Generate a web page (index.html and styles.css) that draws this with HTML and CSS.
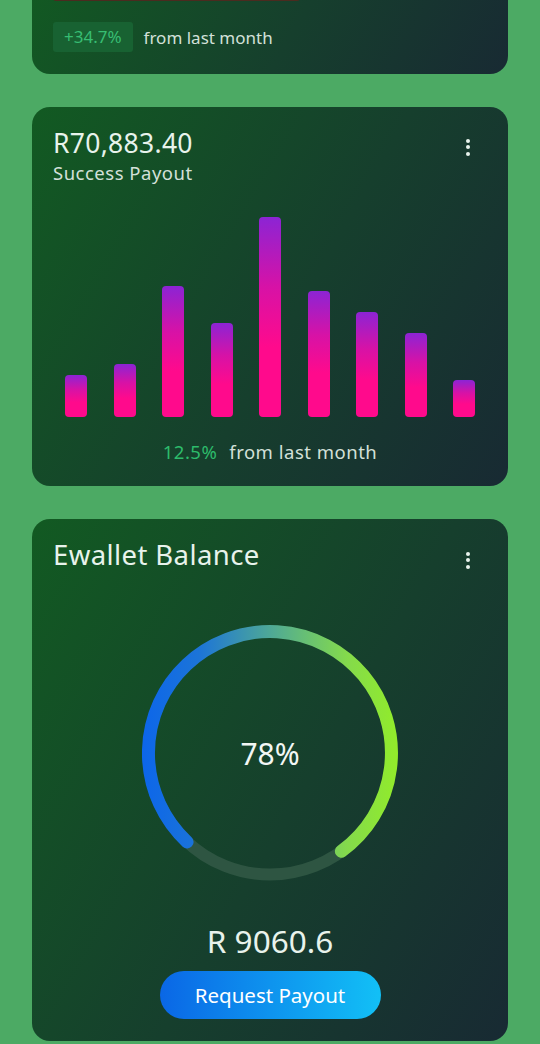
FILE: index.html
```html
<!DOCTYPE html>
<html lang="en">
<head>
    <meta charset="UTF-8">
    <meta name="viewport" content="width=device-width, initial-scale=1.0">
    <title>Payout Dashboard</title>
    <link rel="stylesheet" href="styles.css">
</head>
<body>

    <div class="screen">

        <!-- Growth card (scrolled, top cut off) -->
        <section class="card card-growth">
            <div class="progress"><div class="progress-fill"></div></div>
            <div class="growth-row">
                <span class="badge">+34.7%</span>
                <span class="muted">from last month</span>
            </div>
        </section>

        <!-- Success Payout -->
        <section class="card card-payout">
            <div class="card-head">
                <div>
                    <div class="amount">R70,883.40</div>
                    <div class="label">Success Payout</div>
                </div>
                <button class="kebab" aria-label="More"><span></span><span></span><span></span></button>
            </div>

            <div class="bars">
                <div class="bar" style="height: 42px"></div>
                <div class="bar" style="height: 53px"></div>
                <div class="bar" style="height: 131px"></div>
                <div class="bar" style="height: 94px"></div>
                <div class="bar" style="height: 200px"></div>
                <div class="bar" style="height: 126px"></div>
                <div class="bar" style="height: 105px"></div>
                <div class="bar" style="height: 84px"></div>
                <div class="bar" style="height: 37px"></div>
            </div>

            <div class="caption">
                <span class="up">12.5%</span>
                <span class="muted">from last month</span>
            </div>
        </section>

        <!-- Ewallet Balance -->
        <section class="card card-wallet">
            <div class="card-head">
                <h2 class="title">Ewallet Balance</h2>
                <button class="kebab" aria-label="More"><span></span><span></span><span></span></button>
            </div>

            <div class="gauge">
                <svg width="256" height="256" viewBox="0 0 256 256">
                    <defs>
                        <linearGradient id="arcGrad" gradientUnits="userSpaceOnUse" x1="0" y1="0" x2="256" y2="0">
                            <stop offset="0" stop-color="#0c66ea"/>
                            <stop offset="0.22" stop-color="#1c74d8"/>
                            <stop offset="0.5" stop-color="#4ea897"/>
                            <stop offset="0.8" stop-color="#84da4c"/>
                            <stop offset="1" stop-color="#92ec2a"/>
                        </linearGradient>
                    </defs>
                    <circle class="gauge-track" cx="128" cy="128" r="121.5"/>
                    <!-- 78% of the ring, from lower left round to lower right -->
                    <path class="gauge-arc" stroke="url(#arcGrad)"
                          d="M45.1 216.9 A121.5 121.5 0 1 1 199.4 226.3"/>
                </svg>
                <div class="gauge-value">78%</div>
            </div>

            <div class="balance">R 9060.6</div>
            <button class="btn-payout">Request Payout</button>
        </section>

    </div>

</body>
</html>
```

FILE: styles.css
```css
/* General */
body {
    margin: 0;
    background-color: #4caa64;
    font-family: "Noto Sans", "Open Sans", sans-serif;
    color: #e8f3ec;
    overflow: hidden;
}

.screen {
    margin-top: -21px;
    padding: 0 32px;
    display: flex;
    flex-direction: column;
    gap: 33px;
}

/* Cards */
.card {
    border-radius: 18px;
    background: linear-gradient(120deg, #125a22 0%, #163f2d 55%, #182a33 100%);
    padding: 16px 21px 22px;
}

.card-head {
    display: flex;
    justify-content: space-between;
    align-items: flex-start;
}

.kebab {
    width: 24px;
    height: 24px;
    margin: 12px 7px 0 0;
    padding: 0;
    border: none;
    background: none;
    display: flex;
    flex-direction: column;
    align-items: center;
    justify-content: center;
    gap: 2.5px;
    cursor: pointer;
}

.kebab span {
    width: 4px;
    height: 4px;
    border-radius: 50%;
    background-color: #e8f3ec;
}

.muted {
    color: #d3e0d9;
}

/* Growth card */
.progress {
    height: 6px;
}

.progress-fill {
    width: 57%;
    height: 100%;
    border-radius: 3px;
    background-color: #4b2b1f;
}

.growth-row {
    margin-top: 21px;
    display: flex;
    align-items: center;
    gap: 11px;
    font-size: 17px;
}

.badge {
    display: inline-block;
    height: 30px;
    line-height: 30px;
    padding: 0 11px;
    border-radius: 3px;
    background-color: #186232;
    color: #37bd72;
}

/* Success payout */
.card-payout {
    padding-top: 19px;
}

.card-payout .kebab {
    margin-top: 9px;
}

.amount {
    font-size: 26.5px;
    line-height: 34px;
    letter-spacing: 0.3px;
}

.label {
    margin-top: 1px;
    font-size: 18.5px;
    line-height: 24px;
    letter-spacing: 0.5px;
    color: #d3e0d9;
}

.bars {
    height: 200px;
    margin-top: 32px;
    padding: 0 12px;
    display: flex;
    justify-content: space-between;
    align-items: flex-end;
}

.bar {
    width: 22px;
    border-radius: 4px;
    background: linear-gradient(to bottom, #8c24d4 0%, #d712a6 35%, #ff0a8c 65%);
}

.caption {
    margin-top: 23px;
    display: flex;
    justify-content: center;
    gap: 12px;
    font-size: 18.5px;
    line-height: 24px;
    letter-spacing: 0.5px;
}

.up {
    color: #2dbb6b;
}

/* Ewallet */
.card-wallet {
    padding-top: 19px;
}

.card-wallet .kebab {
    margin-top: 10px;
}

.title {
    margin: 0;
    font-size: 27.5px;
    line-height: 34px;
    font-weight: 400;
    letter-spacing: 0.4px;
}

.gauge {
    position: relative;
    width: 256px;
    height: 256px;
    margin: 53px auto 0;
}

.gauge svg {
    display: block;
}

.gauge-track {
    fill: none;
    stroke: #2e5542;
    stroke-width: 12;
}

.gauge-arc {
    fill: none;
    stroke-width: 13;
    stroke-linecap: round;
}

.gauge-value {
    position: absolute;
    inset: 0;
    display: flex;
    align-items: center;
    justify-content: center;
    font-size: 30px;
    color: #f2f7f4;
}

.balance {
    margin-top: 41px;
    text-align: center;
    font-size: 31.5px;
    line-height: 38px;
}

.btn-payout {
    display: block;
    width: 221px;
    height: 48px;
    margin: 11px auto 0;
    border: none;
    border-radius: 24px;
    background: linear-gradient(to right, #0a67e6, #12c0f6);
    color: #ffffff;
    font-family: inherit;
    font-size: 20.5px;
    cursor: pointer;
}
```
